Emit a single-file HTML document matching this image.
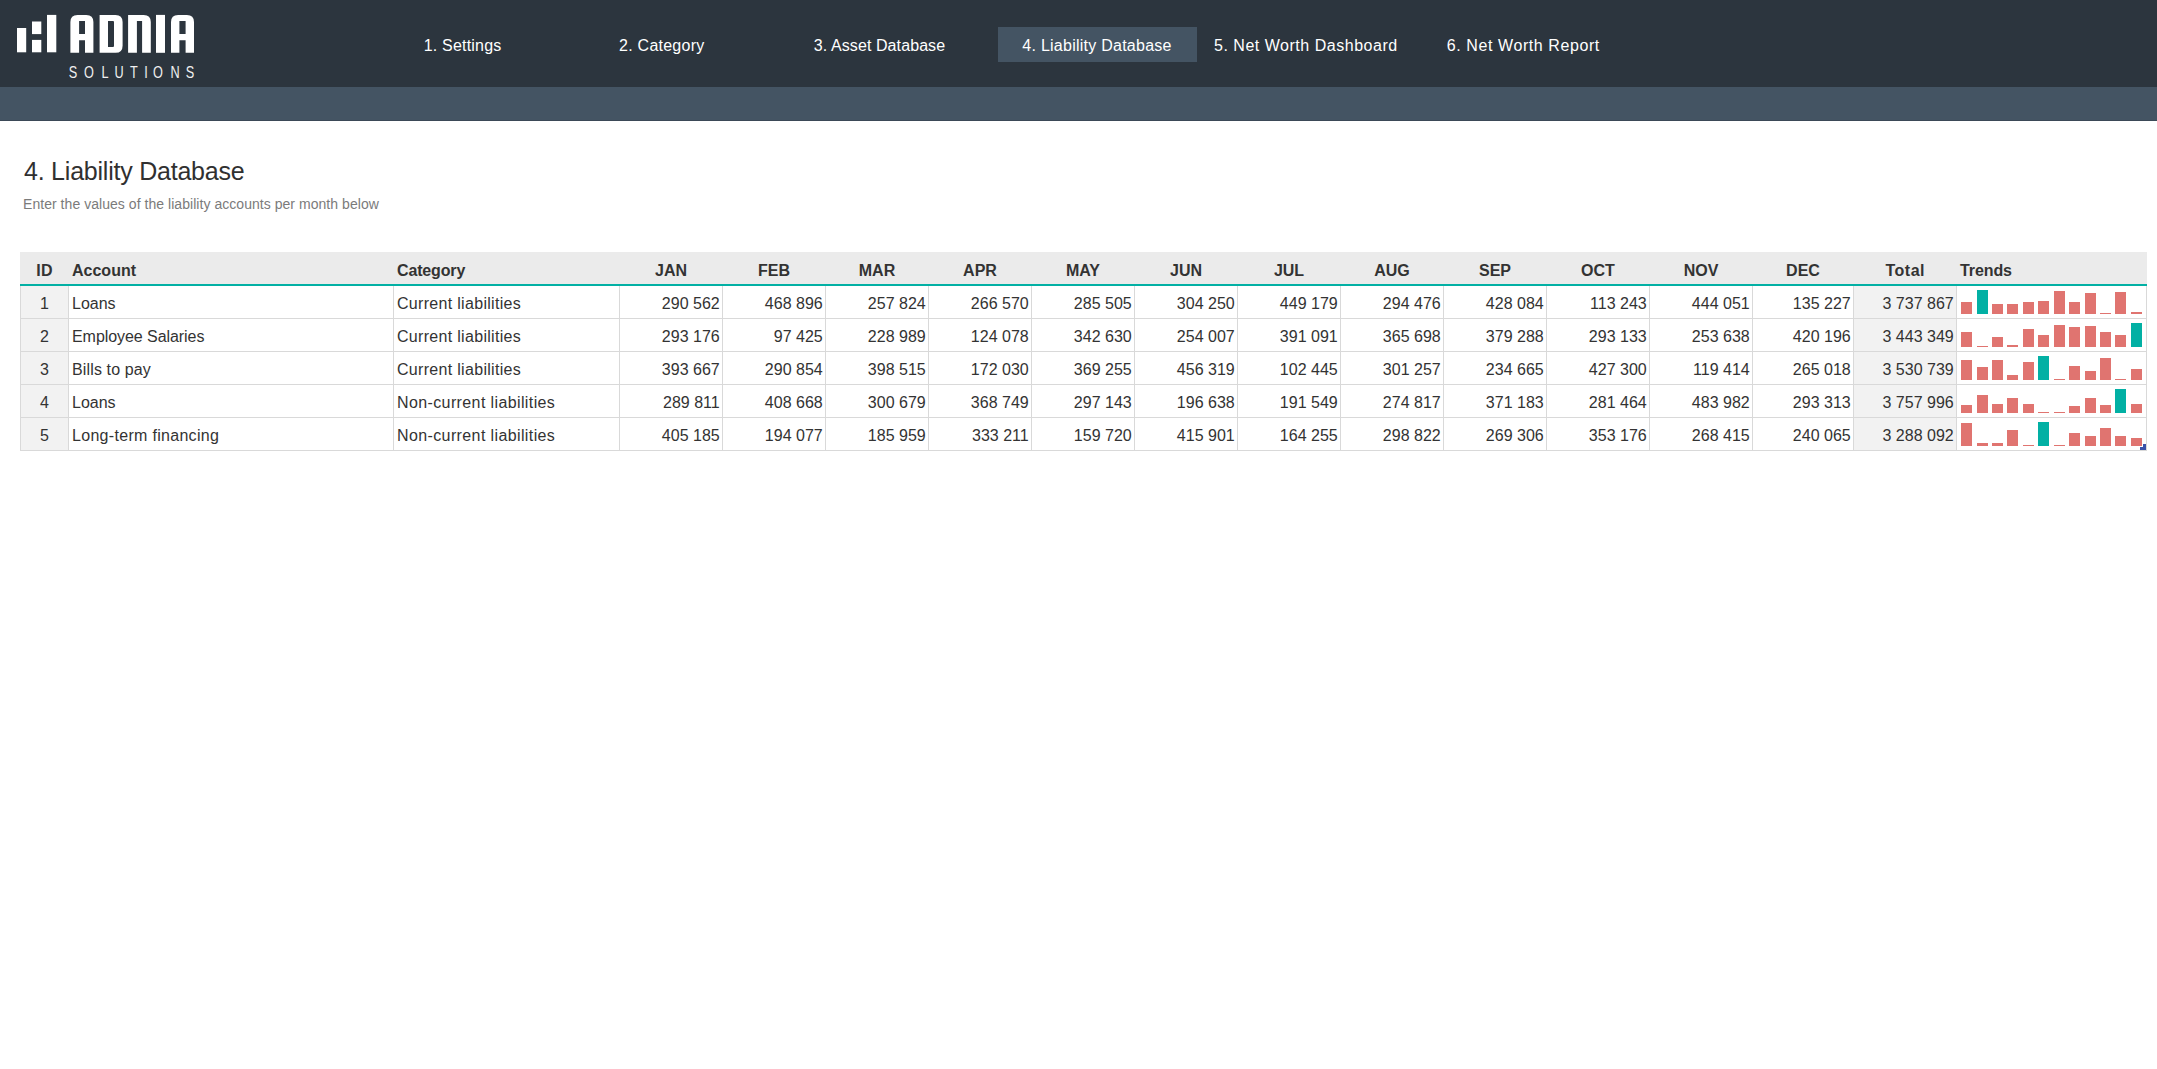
<!DOCTYPE html>
<html><head><meta charset="utf-8"><style>
html,body{margin:0;padding:0;background:#fff;width:2157px;height:1069px;overflow:hidden;position:relative;font-family:"Liberation Sans", sans-serif;}
.t{position:absolute;white-space:pre;line-height:1;font-family:"Liberation Sans", sans-serif;}
.r{position:absolute;}
</style></head><body>
<div class="r" style="left:0px;top:0px;width:2157px;height:87px;background:#2c353e;"></div>
<div class="r" style="left:0px;top:87px;width:2157px;height:34px;background:#445463;"></div>
<div class="r" style="left:0px;top:120px;width:2157px;height:1px;background:#3b4957;"></div>
<div class="r" style="left:998px;top:27px;width:199px;height:35px;background:#445463;"></div>
<svg class="r" style="left:0;top:0" width="220" height="87" viewBox="0 0 220 87">
<g fill="#ffffff">
<rect x="17" y="28" width="9.2" height="24.3"/>
<rect x="32" y="21.5" width="9.3" height="12.6"/>
<rect x="32" y="39.9" width="9.3" height="12.4"/>
<rect x="47" y="14.9" width="9.3" height="37.4"/>
<path fill-rule="evenodd" d="M70.4 52.8 V22 Q70.4 14.9 77.5 14.9 H86.3 Q93.4 14.9 93.4 22 V52.8 H85 V40.2 H79.1 V52.8 Z M79.1 21 V33.9 H85 V21 Z"/>
<path fill-rule="evenodd" d="M99.6 52.8 V14.9 H115.5 Q122.6 14.9 122.6 22 V45.7 Q122.6 52.8 115.5 52.8 Z M108 21 V47 H113 Q114 47 114 46 V22 Q114 21 113 21 Z"/>
<path d="M128.1 52.8 V14.9 H143.7 Q150.8 14.9 150.8 22 V52.8 H142.1 V21 H136.9 V52.8 Z"/>
<rect x="156" y="14.9" width="9" height="37.9"/>
<path fill-rule="evenodd" d="M171 52.8 V22 Q171 14.9 178.1 14.9 H186.9 Q194 14.9 194 22 V52.8 H185.6 V40.2 H179.4 V52.8 Z M179.4 21 V33.9 H185.6 V21 Z"/>
</g></svg>
<div class="t" style="left:53.349999999999994px;width:40px;text-align:center;top:63.5px;font-size:16.5px;color:#f0f0f0;transform:scaleX(0.77)">S</div>
<div class="t" style="left:69.35px;width:40px;text-align:center;top:63.5px;font-size:16.5px;color:#f0f0f0;transform:scaleX(0.77)">O</div>
<div class="t" style="left:84.6px;width:40px;text-align:center;top:63.5px;font-size:16.5px;color:#f0f0f0;transform:scaleX(0.77)">L</div>
<div class="t" style="left:99.05px;width:40px;text-align:center;top:63.5px;font-size:16.5px;color:#f0f0f0;transform:scaleX(0.77)">U</div>
<div class="t" style="left:113.80000000000001px;width:40px;text-align:center;top:63.5px;font-size:16.5px;color:#f0f0f0;transform:scaleX(0.77)">T</div>
<div class="t" style="left:125.85px;width:40px;text-align:center;top:63.5px;font-size:16.5px;color:#f0f0f0;transform:scaleX(0.77)">I</div>
<div class="t" style="left:138.35px;width:40px;text-align:center;top:63.5px;font-size:16.5px;color:#f0f0f0;transform:scaleX(0.77)">O</div>
<div class="t" style="left:154.7px;width:40px;text-align:center;top:63.5px;font-size:16.5px;color:#f0f0f0;transform:scaleX(0.77)">N</div>
<div class="t" style="left:169.95px;width:40px;text-align:center;top:63.5px;font-size:16.5px;color:#f0f0f0;transform:scaleX(0.77)">S</div>
<div class="t" style="left:-37.4px;width:1000px;text-align:center;top:37.5px;font-size:16px;font-weight:400;color:#ffffff;letter-spacing:0.200px;">1. Settings</div>
<div class="t" style="left:161.7750000000001px;width:1000px;text-align:center;top:37.5px;font-size:16px;font-weight:400;color:#ffffff;letter-spacing:0.250px;">2. Category</div>
<div class="t" style="left:379.49750000000006px;width:1000px;text-align:center;top:37.5px;font-size:16px;font-weight:400;color:#ffffff;letter-spacing:0.095px;">3. Asset Database</div>
<div class="t" style="left:597.0250000000001px;width:1000px;text-align:center;top:37.5px;font-size:16px;font-weight:400;color:#ffffff;letter-spacing:0.250px;">4. Liability Database</div>
<div class="t" style="left:805.8625px;width:1000px;text-align:center;top:37.5px;font-size:16px;font-weight:400;color:#ffffff;letter-spacing:0.525px;">5. Net Worth Dashboard</div>
<div class="t" style="left:1023.3415000000002px;width:1000px;text-align:center;top:37.5px;font-size:16px;font-weight:400;color:#ffffff;letter-spacing:0.583px;">6. Net Worth Report</div>
<div class="t" style="left:24px;top:158.5px;font-size:25px;font-weight:400;color:#303030;letter-spacing:-0.225px;">4. Liability Database</div>
<div class="t" style="left:23px;top:197px;font-size:14px;font-weight:400;color:#7b7b7b;letter-spacing:0.044px;">Enter the values of the liability accounts per month below</div>
<div class="r" style="left:20px;top:252px;width:2127px;height:32px;background:#ebebeb;"></div>
<div class="r" style="left:20px;top:284px;width:2127px;height:2px;background:#02b0a4;"></div>
<div class="r" style="left:21px;top:286px;width:47px;height:32px;background:#f2f2f2;"></div>
<div class="r" style="left:1854px;top:286px;width:102px;height:32px;background:#f2f2f2;"></div>
<div class="r" style="left:21px;top:319px;width:47px;height:32px;background:#f2f2f2;"></div>
<div class="r" style="left:1854px;top:319px;width:102px;height:32px;background:#f2f2f2;"></div>
<div class="r" style="left:21px;top:352px;width:47px;height:32px;background:#f2f2f2;"></div>
<div class="r" style="left:1854px;top:352px;width:102px;height:32px;background:#f2f2f2;"></div>
<div class="r" style="left:21px;top:385px;width:47px;height:32px;background:#f2f2f2;"></div>
<div class="r" style="left:1854px;top:385px;width:102px;height:32px;background:#f2f2f2;"></div>
<div class="r" style="left:21px;top:418px;width:47px;height:32px;background:#f2f2f2;"></div>
<div class="r" style="left:1854px;top:418px;width:102px;height:32px;background:#f2f2f2;"></div>
<div class="r" style="left:20px;top:318px;width:2127px;height:1px;background:#d9d9d9;"></div>
<div class="r" style="left:20px;top:351px;width:2127px;height:1px;background:#d9d9d9;"></div>
<div class="r" style="left:20px;top:384px;width:2127px;height:1px;background:#d9d9d9;"></div>
<div class="r" style="left:20px;top:417px;width:2127px;height:1px;background:#d9d9d9;"></div>
<div class="r" style="left:20px;top:450px;width:2127px;height:1px;background:#d9d9d9;"></div>
<div class="r" style="left:20px;top:286px;width:1px;height:165px;background:#d9d9d9;"></div>
<div class="r" style="left:68px;top:286px;width:1px;height:165px;background:#d9d9d9;"></div>
<div class="r" style="left:393px;top:286px;width:1px;height:165px;background:#d9d9d9;"></div>
<div class="r" style="left:619px;top:286px;width:1px;height:165px;background:#d9d9d9;"></div>
<div class="r" style="left:722px;top:286px;width:1px;height:165px;background:#d9d9d9;"></div>
<div class="r" style="left:825px;top:286px;width:1px;height:165px;background:#d9d9d9;"></div>
<div class="r" style="left:928px;top:286px;width:1px;height:165px;background:#d9d9d9;"></div>
<div class="r" style="left:1031px;top:286px;width:1px;height:165px;background:#d9d9d9;"></div>
<div class="r" style="left:1134px;top:286px;width:1px;height:165px;background:#d9d9d9;"></div>
<div class="r" style="left:1237px;top:286px;width:1px;height:165px;background:#d9d9d9;"></div>
<div class="r" style="left:1340px;top:286px;width:1px;height:165px;background:#d9d9d9;"></div>
<div class="r" style="left:1443px;top:286px;width:1px;height:165px;background:#d9d9d9;"></div>
<div class="r" style="left:1546px;top:286px;width:1px;height:165px;background:#d9d9d9;"></div>
<div class="r" style="left:1649px;top:286px;width:1px;height:165px;background:#d9d9d9;"></div>
<div class="r" style="left:1752px;top:286px;width:1px;height:165px;background:#d9d9d9;"></div>
<div class="r" style="left:1853px;top:286px;width:1px;height:165px;background:#d9d9d9;"></div>
<div class="r" style="left:1956px;top:286px;width:1px;height:165px;background:#d9d9d9;"></div>
<div class="r" style="left:2146px;top:286px;width:1px;height:165px;background:#d9d9d9;"></div>
<div class="t" style="left:-455.35px;width:1000px;text-align:center;top:262.5px;font-size:16px;font-weight:700;color:#333333;letter-spacing:0.300px;">ID</div>
<div class="t" style="left:72px;top:262.5px;font-size:16px;font-weight:700;color:#333333;letter-spacing:0.001px;">Account</div>
<div class="t" style="left:397px;top:262.5px;font-size:16px;font-weight:700;color:#333333;letter-spacing:-0.143px;">Category</div>
<div class="t" style="left:171.0px;width:1000px;text-align:center;top:262.5px;font-size:16px;font-weight:700;color:#333333;letter-spacing:0.000px;">JAN</div>
<div class="t" style="left:274.0px;width:1000px;text-align:center;top:262.5px;font-size:16px;font-weight:700;color:#333333;letter-spacing:0.000px;">FEB</div>
<div class="t" style="left:377.0px;width:1000px;text-align:center;top:262.5px;font-size:16px;font-weight:700;color:#333333;letter-spacing:0.000px;">MAR</div>
<div class="t" style="left:480.0px;width:1000px;text-align:center;top:262.5px;font-size:16px;font-weight:700;color:#333333;letter-spacing:0.000px;">APR</div>
<div class="t" style="left:583.0px;width:1000px;text-align:center;top:262.5px;font-size:16px;font-weight:700;color:#333333;letter-spacing:0.000px;">MAY</div>
<div class="t" style="left:686.0px;width:1000px;text-align:center;top:262.5px;font-size:16px;font-weight:700;color:#333333;letter-spacing:0.000px;">JUN</div>
<div class="t" style="left:789.0px;width:1000px;text-align:center;top:262.5px;font-size:16px;font-weight:700;color:#333333;letter-spacing:0.000px;">JUL</div>
<div class="t" style="left:892.0px;width:1000px;text-align:center;top:262.5px;font-size:16px;font-weight:700;color:#333333;letter-spacing:0.000px;">AUG</div>
<div class="t" style="left:995.0px;width:1000px;text-align:center;top:262.5px;font-size:16px;font-weight:700;color:#333333;letter-spacing:0.000px;">SEP</div>
<div class="t" style="left:1098.0px;width:1000px;text-align:center;top:262.5px;font-size:16px;font-weight:700;color:#333333;letter-spacing:0.000px;">OCT</div>
<div class="t" style="left:1201.0px;width:1000px;text-align:center;top:262.5px;font-size:16px;font-weight:700;color:#333333;letter-spacing:0.000px;">NOV</div>
<div class="t" style="left:1303.0px;width:1000px;text-align:center;top:262.5px;font-size:16px;font-weight:700;color:#333333;letter-spacing:0.000px;">DEC</div>
<div class="t" style="left:1405.25px;width:1000px;text-align:center;top:262.5px;font-size:16px;font-weight:700;color:#333333;letter-spacing:0.500px;">Total</div>
<div class="t" style="left:1960px;top:262.5px;font-size:16px;font-weight:700;color:#333333;letter-spacing:-0.100px;">Trends</div>
<div class="t" style="left:-455.5px;width:1000px;text-align:center;top:296px;font-size:16px;font-weight:400;color:#333333;letter-spacing:0.000px;">1</div>
<div class="t" style="left:72px;top:296px;font-size:16px;font-weight:400;color:#333333;letter-spacing:-0.000px;">Loans</div>
<div class="t" style="left:397px;top:296px;font-size:16px;font-weight:400;color:#333333;letter-spacing:0.307px;">Current liabilities</div>
<div class="t" style="right:1437.3px;top:296px;font-size:16px;font-weight:400;color:#333333;letter-spacing:0.000px;">290 562</div>
<div class="t" style="right:1334.3px;top:296px;font-size:16px;font-weight:400;color:#333333;letter-spacing:0.000px;">468 896</div>
<div class="t" style="right:1231.3px;top:296px;font-size:16px;font-weight:400;color:#333333;letter-spacing:0.000px;">257 824</div>
<div class="t" style="right:1128.3px;top:296px;font-size:16px;font-weight:400;color:#333333;letter-spacing:0.000px;">266 570</div>
<div class="t" style="right:1025.3px;top:296px;font-size:16px;font-weight:400;color:#333333;letter-spacing:0.000px;">285 505</div>
<div class="t" style="right:922.3px;top:296px;font-size:16px;font-weight:400;color:#333333;letter-spacing:0.000px;">304 250</div>
<div class="t" style="right:819.3px;top:296px;font-size:16px;font-weight:400;color:#333333;letter-spacing:0.000px;">449 179</div>
<div class="t" style="right:716.3px;top:296px;font-size:16px;font-weight:400;color:#333333;letter-spacing:0.000px;">294 476</div>
<div class="t" style="right:613.3px;top:296px;font-size:16px;font-weight:400;color:#333333;letter-spacing:0.000px;">428 084</div>
<div class="t" style="right:510.29999999999995px;top:296px;font-size:16px;font-weight:400;color:#333333;letter-spacing:0.000px;">113 243</div>
<div class="t" style="right:407.29999999999995px;top:296px;font-size:16px;font-weight:400;color:#333333;letter-spacing:0.000px;">444 051</div>
<div class="t" style="right:306.29999999999995px;top:296px;font-size:16px;font-weight:400;color:#333333;letter-spacing:0.000px;">135 227</div>
<div class="t" style="right:203.29999999999995px;top:296px;font-size:16px;font-weight:400;color:#333333;letter-spacing:0.000px;">3 737 867</div>
<div class="r" style="left:1961px;top:302px;width:11px;height:12px;background:#e07470;"></div>
<div class="r" style="left:1977px;top:290px;width:11px;height:24px;background:#02b0a4;"></div>
<div class="r" style="left:1992px;top:304px;width:11px;height:10px;background:#e07470;"></div>
<div class="r" style="left:2007px;top:304px;width:11px;height:10px;background:#e07470;"></div>
<div class="r" style="left:2023px;top:302px;width:11px;height:12px;background:#e07470;"></div>
<div class="r" style="left:2038px;top:301px;width:11px;height:13px;background:#e07470;"></div>
<div class="r" style="left:2054px;top:291px;width:11px;height:23px;background:#e07470;"></div>
<div class="r" style="left:2069px;top:302px;width:11px;height:12px;background:#e07470;"></div>
<div class="r" style="left:2085px;top:293px;width:11px;height:21px;background:#e07470;"></div>
<div class="r" style="left:2100px;top:313px;width:11px;height:1px;background:#e07470;"></div>
<div class="r" style="left:2115px;top:292px;width:11px;height:22px;background:#e07470;"></div>
<div class="r" style="left:2131px;top:312px;width:11px;height:2px;background:#e07470;"></div>
<div class="t" style="left:-455.5px;width:1000px;text-align:center;top:329px;font-size:16px;font-weight:400;color:#333333;letter-spacing:0.000px;">2</div>
<div class="t" style="left:72px;top:329px;font-size:16px;font-weight:400;color:#333333;letter-spacing:-0.062px;">Employee Salaries</div>
<div class="t" style="left:397px;top:329px;font-size:16px;font-weight:400;color:#333333;letter-spacing:0.307px;">Current liabilities</div>
<div class="t" style="right:1437.3px;top:329px;font-size:16px;font-weight:400;color:#333333;letter-spacing:0.000px;">293 176</div>
<div class="t" style="right:1334.3px;top:329px;font-size:16px;font-weight:400;color:#333333;letter-spacing:0.000px;">97 425</div>
<div class="t" style="right:1231.3px;top:329px;font-size:16px;font-weight:400;color:#333333;letter-spacing:0.000px;">228 989</div>
<div class="t" style="right:1128.3px;top:329px;font-size:16px;font-weight:400;color:#333333;letter-spacing:0.000px;">124 078</div>
<div class="t" style="right:1025.3px;top:329px;font-size:16px;font-weight:400;color:#333333;letter-spacing:0.000px;">342 630</div>
<div class="t" style="right:922.3px;top:329px;font-size:16px;font-weight:400;color:#333333;letter-spacing:0.000px;">254 007</div>
<div class="t" style="right:819.3px;top:329px;font-size:16px;font-weight:400;color:#333333;letter-spacing:0.000px;">391 091</div>
<div class="t" style="right:716.3px;top:329px;font-size:16px;font-weight:400;color:#333333;letter-spacing:0.000px;">365 698</div>
<div class="t" style="right:613.3px;top:329px;font-size:16px;font-weight:400;color:#333333;letter-spacing:0.000px;">379 288</div>
<div class="t" style="right:510.29999999999995px;top:329px;font-size:16px;font-weight:400;color:#333333;letter-spacing:0.000px;">293 133</div>
<div class="t" style="right:407.29999999999995px;top:329px;font-size:16px;font-weight:400;color:#333333;letter-spacing:0.000px;">253 638</div>
<div class="t" style="right:306.29999999999995px;top:329px;font-size:16px;font-weight:400;color:#333333;letter-spacing:0.000px;">420 196</div>
<div class="t" style="right:203.29999999999995px;top:329px;font-size:16px;font-weight:400;color:#333333;letter-spacing:0.000px;">3 443 349</div>
<div class="r" style="left:1961px;top:332px;width:11px;height:15px;background:#e07470;"></div>
<div class="r" style="left:1977px;top:346px;width:11px;height:1px;background:#e07470;"></div>
<div class="r" style="left:1992px;top:337px;width:11px;height:10px;background:#e07470;"></div>
<div class="r" style="left:2007px;top:345px;width:11px;height:2px;background:#e07470;"></div>
<div class="r" style="left:2023px;top:329px;width:11px;height:18px;background:#e07470;"></div>
<div class="r" style="left:2038px;top:335px;width:11px;height:12px;background:#e07470;"></div>
<div class="r" style="left:2054px;top:325px;width:11px;height:22px;background:#e07470;"></div>
<div class="r" style="left:2069px;top:327px;width:11px;height:20px;background:#e07470;"></div>
<div class="r" style="left:2085px;top:326px;width:11px;height:21px;background:#e07470;"></div>
<div class="r" style="left:2100px;top:332px;width:11px;height:15px;background:#e07470;"></div>
<div class="r" style="left:2115px;top:335px;width:11px;height:12px;background:#e07470;"></div>
<div class="r" style="left:2131px;top:323px;width:11px;height:24px;background:#02b0a4;"></div>
<div class="t" style="left:-455.5px;width:1000px;text-align:center;top:362px;font-size:16px;font-weight:400;color:#333333;letter-spacing:0.000px;">3</div>
<div class="t" style="left:72px;top:362px;font-size:16px;font-weight:400;color:#333333;letter-spacing:0.136px;">Bills to pay</div>
<div class="t" style="left:397px;top:362px;font-size:16px;font-weight:400;color:#333333;letter-spacing:0.307px;">Current liabilities</div>
<div class="t" style="right:1437.3px;top:362px;font-size:16px;font-weight:400;color:#333333;letter-spacing:0.000px;">393 667</div>
<div class="t" style="right:1334.3px;top:362px;font-size:16px;font-weight:400;color:#333333;letter-spacing:0.000px;">290 854</div>
<div class="t" style="right:1231.3px;top:362px;font-size:16px;font-weight:400;color:#333333;letter-spacing:0.000px;">398 515</div>
<div class="t" style="right:1128.3px;top:362px;font-size:16px;font-weight:400;color:#333333;letter-spacing:0.000px;">172 030</div>
<div class="t" style="right:1025.3px;top:362px;font-size:16px;font-weight:400;color:#333333;letter-spacing:0.000px;">369 255</div>
<div class="t" style="right:922.3px;top:362px;font-size:16px;font-weight:400;color:#333333;letter-spacing:0.000px;">456 319</div>
<div class="t" style="right:819.3px;top:362px;font-size:16px;font-weight:400;color:#333333;letter-spacing:0.000px;">102 445</div>
<div class="t" style="right:716.3px;top:362px;font-size:16px;font-weight:400;color:#333333;letter-spacing:0.000px;">301 257</div>
<div class="t" style="right:613.3px;top:362px;font-size:16px;font-weight:400;color:#333333;letter-spacing:0.000px;">234 665</div>
<div class="t" style="right:510.29999999999995px;top:362px;font-size:16px;font-weight:400;color:#333333;letter-spacing:0.000px;">427 300</div>
<div class="t" style="right:407.29999999999995px;top:362px;font-size:16px;font-weight:400;color:#333333;letter-spacing:0.000px;">119 414</div>
<div class="t" style="right:306.29999999999995px;top:362px;font-size:16px;font-weight:400;color:#333333;letter-spacing:0.000px;">265 018</div>
<div class="t" style="right:203.29999999999995px;top:362px;font-size:16px;font-weight:400;color:#333333;letter-spacing:0.000px;">3 530 739</div>
<div class="r" style="left:1961px;top:360px;width:11px;height:20px;background:#e07470;"></div>
<div class="r" style="left:1977px;top:367px;width:11px;height:13px;background:#e07470;"></div>
<div class="r" style="left:1992px;top:360px;width:11px;height:20px;background:#e07470;"></div>
<div class="r" style="left:2007px;top:375px;width:11px;height:5px;background:#e07470;"></div>
<div class="r" style="left:2023px;top:362px;width:11px;height:18px;background:#e07470;"></div>
<div class="r" style="left:2038px;top:356px;width:11px;height:24px;background:#02b0a4;"></div>
<div class="r" style="left:2054px;top:379px;width:11px;height:1px;background:#e07470;"></div>
<div class="r" style="left:2069px;top:366px;width:11px;height:14px;background:#e07470;"></div>
<div class="r" style="left:2085px;top:371px;width:11px;height:9px;background:#e07470;"></div>
<div class="r" style="left:2100px;top:358px;width:11px;height:22px;background:#e07470;"></div>
<div class="r" style="left:2115px;top:379px;width:11px;height:1px;background:#e07470;"></div>
<div class="r" style="left:2131px;top:369px;width:11px;height:11px;background:#e07470;"></div>
<div class="t" style="left:-455.5px;width:1000px;text-align:center;top:395px;font-size:16px;font-weight:400;color:#333333;letter-spacing:0.000px;">4</div>
<div class="t" style="left:72px;top:395px;font-size:16px;font-weight:400;color:#333333;letter-spacing:-0.000px;">Loans</div>
<div class="t" style="left:397px;top:395px;font-size:16px;font-weight:400;color:#333333;letter-spacing:0.385px;">Non-current liabilities</div>
<div class="t" style="right:1437.3px;top:395px;font-size:16px;font-weight:400;color:#333333;letter-spacing:0.000px;">289 811</div>
<div class="t" style="right:1334.3px;top:395px;font-size:16px;font-weight:400;color:#333333;letter-spacing:0.000px;">408 668</div>
<div class="t" style="right:1231.3px;top:395px;font-size:16px;font-weight:400;color:#333333;letter-spacing:0.000px;">300 679</div>
<div class="t" style="right:1128.3px;top:395px;font-size:16px;font-weight:400;color:#333333;letter-spacing:0.000px;">368 749</div>
<div class="t" style="right:1025.3px;top:395px;font-size:16px;font-weight:400;color:#333333;letter-spacing:0.000px;">297 143</div>
<div class="t" style="right:922.3px;top:395px;font-size:16px;font-weight:400;color:#333333;letter-spacing:0.000px;">196 638</div>
<div class="t" style="right:819.3px;top:395px;font-size:16px;font-weight:400;color:#333333;letter-spacing:0.000px;">191 549</div>
<div class="t" style="right:716.3px;top:395px;font-size:16px;font-weight:400;color:#333333;letter-spacing:0.000px;">274 817</div>
<div class="t" style="right:613.3px;top:395px;font-size:16px;font-weight:400;color:#333333;letter-spacing:0.000px;">371 183</div>
<div class="t" style="right:510.29999999999995px;top:395px;font-size:16px;font-weight:400;color:#333333;letter-spacing:0.000px;">281 464</div>
<div class="t" style="right:407.29999999999995px;top:395px;font-size:16px;font-weight:400;color:#333333;letter-spacing:0.000px;">483 982</div>
<div class="t" style="right:306.29999999999995px;top:395px;font-size:16px;font-weight:400;color:#333333;letter-spacing:0.000px;">293 313</div>
<div class="t" style="right:203.29999999999995px;top:395px;font-size:16px;font-weight:400;color:#333333;letter-spacing:0.000px;">3 757 996</div>
<div class="r" style="left:1961px;top:405px;width:11px;height:8px;background:#e07470;"></div>
<div class="r" style="left:1977px;top:395px;width:11px;height:18px;background:#e07470;"></div>
<div class="r" style="left:1992px;top:404px;width:11px;height:9px;background:#e07470;"></div>
<div class="r" style="left:2007px;top:398px;width:11px;height:15px;background:#e07470;"></div>
<div class="r" style="left:2023px;top:404px;width:11px;height:9px;background:#e07470;"></div>
<div class="r" style="left:2038px;top:412px;width:11px;height:1px;background:#e07470;"></div>
<div class="r" style="left:2054px;top:412px;width:11px;height:1px;background:#e07470;"></div>
<div class="r" style="left:2069px;top:406px;width:11px;height:7px;background:#e07470;"></div>
<div class="r" style="left:2085px;top:398px;width:11px;height:15px;background:#e07470;"></div>
<div class="r" style="left:2100px;top:405px;width:11px;height:8px;background:#e07470;"></div>
<div class="r" style="left:2115px;top:389px;width:11px;height:24px;background:#02b0a4;"></div>
<div class="r" style="left:2131px;top:404px;width:11px;height:9px;background:#e07470;"></div>
<div class="t" style="left:-455.5px;width:1000px;text-align:center;top:428px;font-size:16px;font-weight:400;color:#333333;letter-spacing:0.000px;">5</div>
<div class="t" style="left:72px;top:428px;font-size:16px;font-weight:400;color:#333333;letter-spacing:0.304px;">Long-term financing</div>
<div class="t" style="left:397px;top:428px;font-size:16px;font-weight:400;color:#333333;letter-spacing:0.385px;">Non-current liabilities</div>
<div class="t" style="right:1437.3px;top:428px;font-size:16px;font-weight:400;color:#333333;letter-spacing:0.000px;">405 185</div>
<div class="t" style="right:1334.3px;top:428px;font-size:16px;font-weight:400;color:#333333;letter-spacing:0.000px;">194 077</div>
<div class="t" style="right:1231.3px;top:428px;font-size:16px;font-weight:400;color:#333333;letter-spacing:0.000px;">185 959</div>
<div class="t" style="right:1128.3px;top:428px;font-size:16px;font-weight:400;color:#333333;letter-spacing:0.000px;">333 211</div>
<div class="t" style="right:1025.3px;top:428px;font-size:16px;font-weight:400;color:#333333;letter-spacing:0.000px;">159 720</div>
<div class="t" style="right:922.3px;top:428px;font-size:16px;font-weight:400;color:#333333;letter-spacing:0.000px;">415 901</div>
<div class="t" style="right:819.3px;top:428px;font-size:16px;font-weight:400;color:#333333;letter-spacing:0.000px;">164 255</div>
<div class="t" style="right:716.3px;top:428px;font-size:16px;font-weight:400;color:#333333;letter-spacing:0.000px;">298 822</div>
<div class="t" style="right:613.3px;top:428px;font-size:16px;font-weight:400;color:#333333;letter-spacing:0.000px;">269 306</div>
<div class="t" style="right:510.29999999999995px;top:428px;font-size:16px;font-weight:400;color:#333333;letter-spacing:0.000px;">353 176</div>
<div class="t" style="right:407.29999999999995px;top:428px;font-size:16px;font-weight:400;color:#333333;letter-spacing:0.000px;">268 415</div>
<div class="t" style="right:306.29999999999995px;top:428px;font-size:16px;font-weight:400;color:#333333;letter-spacing:0.000px;">240 065</div>
<div class="t" style="right:203.29999999999995px;top:428px;font-size:16px;font-weight:400;color:#333333;letter-spacing:0.000px;">3 288 092</div>
<div class="r" style="left:1961px;top:423px;width:11px;height:23px;background:#e07470;"></div>
<div class="r" style="left:1977px;top:443px;width:11px;height:3px;background:#e07470;"></div>
<div class="r" style="left:1992px;top:443px;width:11px;height:3px;background:#e07470;"></div>
<div class="r" style="left:2007px;top:430px;width:11px;height:16px;background:#e07470;"></div>
<div class="r" style="left:2023px;top:445px;width:11px;height:1px;background:#e07470;"></div>
<div class="r" style="left:2038px;top:422px;width:11px;height:24px;background:#02b0a4;"></div>
<div class="r" style="left:2054px;top:445px;width:11px;height:1px;background:#e07470;"></div>
<div class="r" style="left:2069px;top:433px;width:11px;height:13px;background:#e07470;"></div>
<div class="r" style="left:2085px;top:436px;width:11px;height:10px;background:#e07470;"></div>
<div class="r" style="left:2100px;top:428px;width:11px;height:18px;background:#e07470;"></div>
<div class="r" style="left:2115px;top:436px;width:11px;height:10px;background:#e07470;"></div>
<div class="r" style="left:2131px;top:438px;width:11px;height:8px;background:#e07470;"></div>
<div class="r" style="left:2143px;top:444px;width:3px;height:6px;background:#3a52a8;"></div>
<div class="r" style="left:2140px;top:447px;width:6px;height:3px;background:#3a52a8;"></div>

</body></html>
